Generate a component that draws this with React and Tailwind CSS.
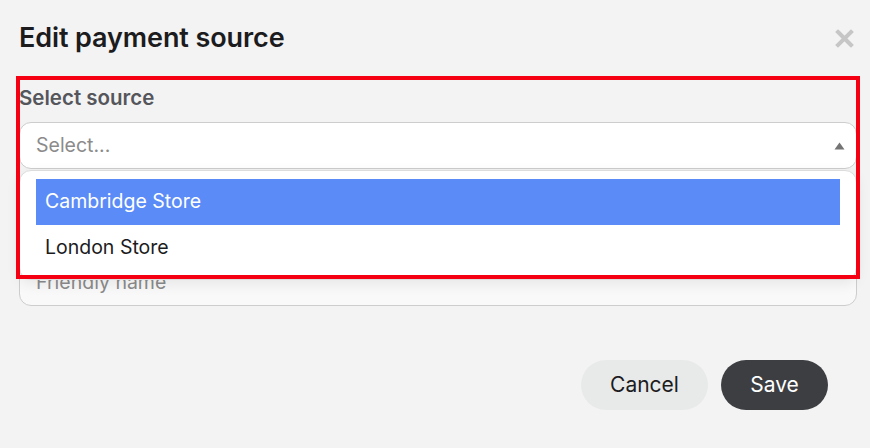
import React from "react";

const CloseIcon = () => (
  <svg width="19" height="19" viewBox="0 0 19 19" fill="none">
    <path d="M3 3 L16 16 M16 3 L3 16" stroke="#c6c6c6" strokeWidth="4" strokeLinecap="square" />
  </svg>
);

const Caret = () => (
  <svg width="11" height="8" viewBox="0 0 11 8">
    <path d="M5.5 0.5 L10.5 7.5 L0.5 7.5 Z" fill="#747474" />
  </svg>
);

const options = ["Cambridge Store", "London Store"];

export default function App() {
  return (
    <div className="relative min-h-screen bg-[#f3f3f3] pl-[19px] pr-[13px] pt-[21px] font-['Inter',sans-serif]">
      {/* Header */}
      <div className="flex items-center justify-between h-[34px]">
        <h2 className="text-[27px] font-semibold text-[#1c1c1e] tracking-[-0.1px]">Edit payment source</h2>
        <button className="mr-[3px] mt-[1px]">
          <CloseIcon />
        </button>
      </div>

      {/* Select source */}
      <div className="mt-[33px]">
        <label className="block h-[24px] text-[20.5px] leading-[20px] font-semibold text-[#55565b]">Select source</label>
        <div className="relative mt-[10px]">
          <div className="flex h-[47px] items-center justify-between rounded-[12px] border border-[#cdcdcd] bg-white pl-[16px] pr-[11px]">
            <span className="text-[19.5px] text-[#8b8b8b]">Select...</span>
            <Caret />
          </div>

          {/* Open menu */}
          <div className="absolute left-0 right-0 top-full z-10 mt-[1px] rounded-[12px] border border-[#dcdcdc] bg-white px-[16px] py-[8px] shadow-[0_4px_14px_rgba(0,0,0,0.08)]">
            {options.map((o, i) => (
              <div
                key={o}
                className={`flex h-[46px] items-center px-[9px] text-[19.5px] ${i === 0 ? "bg-[#5a8bf7] text-white" : "text-[#1c1c1e]"}`}
              >
                {o}
              </div>
            ))}
          </div>
        </div>
      </div>

      {/* Friendly name */}
      <div className="mt-[56px]">
        <label className="block h-[24px] text-[20.5px] leading-[20px] font-semibold text-[#55565b]">Friendly name</label>
        <div className="mt-[10px] flex h-[47px] items-center rounded-[12px] border border-[#cdcdcd] bg-[#f9f9f9] pl-[16px]">
          <span className="text-[19.5px] text-[#8b8b8b]">Friendly name</span>
        </div>
      </div>

      {/* Actions */}
      <div className="mt-[54px] mr-[29px] flex justify-end gap-[13px]">
        <button className="h-[50px] w-[127px] rounded-full bg-[#e8e9e9] text-[21px] text-[#1c1c1e]">Cancel</button>
        <button className="h-[50px] w-[107px] rounded-full bg-[#3d3e42] text-[21px] text-white">Save</button>
      </div>

      {/* Annotation */}
      <div className="pointer-events-none absolute left-[16px] top-[76px] z-20 h-[203px] w-[844px] border-[4px] border-[#f50012]" />
    </div>
  );
}
